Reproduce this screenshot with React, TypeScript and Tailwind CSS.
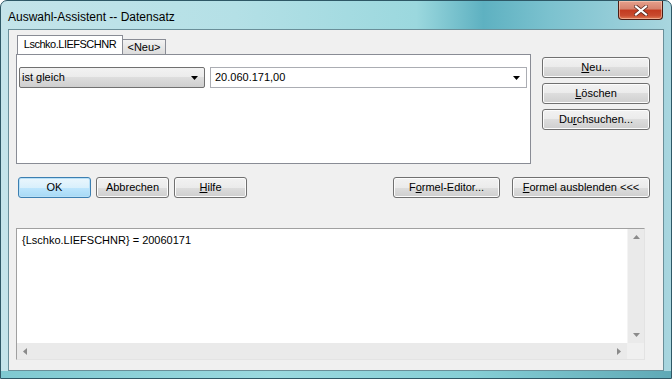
import type { ReactNode } from 'react'

const font = { fontFamily: '"Liberation Sans", Arial, sans-serif' }

function Btn({ children, w, primary }: { children: ReactNode; w: string; primary?: boolean }) {
  return (
    <div
      className={`${w} flex h-[21px] items-center justify-center rounded-[3px] border text-[11px] text-black ${
        primary
          ? 'border-[#3c7fb1] bg-[linear-gradient(#eaf6fd_0%,#d9f0fc_50%,#bee6fd_50%,#a7d9f5_100%)] shadow-[inset_0_0_0_1px_#b8e0f7]'
          : 'border-[#707070] bg-[linear-gradient(#f2f2f2_0%,#ebebeb_50%,#dddddd_50%,#cfcfcf_100%)] shadow-[inset_0_0_0_1px_#fcfcfc]'
      }`}
    >
      {children}
    </div>
  )
}

function Arrow({ dir, color = '#000' }: { dir: 'up' | 'down' | 'left' | 'right'; color?: string }) {
  const pts = {
    down: '0,0 7,0 3.5,4',
    up: '0,4 7,4 3.5,0',
    left: '4,0 4,7 0,3.5',
    right: '0,0 0,7 4,3.5',
  }[dir]
  const vertical = dir === 'up' || dir === 'down'
  return (
    <svg width={vertical ? 7 : 4} height={vertical ? 4 : 7} className="block">
      <polygon points={pts} fill={color} />
    </svg>
  )
}

export default function App() {
  return (
    <div style={font} className="h-[379px] w-[672px] bg-white">
      <div className="flex h-[379px] w-[672px] flex-col overflow-hidden rounded-t-[7px] border border-[#2e5866] bg-[linear-gradient(90deg,#c4e4ea_0%,#b4e0e6_35%,#9bd8de_62%,#5eb1c1_72%,#7cc2cf_82%,#a9d6df_100%)]">
        {/* title bar */}
        <div className="flex h-[28px] shrink-0 items-start justify-between">
          <span className="pl-[7px] pt-[7px] text-[12px] text-black">Auswahl-Assistent -- Datensatz</span>
          <div className="mr-[8px] flex h-[19px] w-[45px] items-center justify-center rounded-b-[4px] border border-t-0 border-[#4a1d14] bg-[linear-gradient(#e6a08c_0%,#d5826d_45%,#c33a1f_50%,#c84a2e_80%,#e07a54_100%)] shadow-[inset_0_0_0_1px_rgba(255,220,200,0.5)]">
            <svg width="14" height="11" viewBox="0 0 14 11">
              <path d="M2 1.5 L12 9.5 M12 1.5 L2 9.5" stroke="#5a2a20" strokeWidth="3.6" strokeLinecap="square" />
              <path d="M2 1.5 L12 9.5 M12 1.5 L2 9.5" stroke="#ffffff" strokeWidth="2.2" strokeLinecap="square" />
            </svg>
          </div>
        </div>

        {/* client area */}
        <div className="mx-[7px] h-[342px] w-[656px] shrink-0 border border-[#6a8f99] bg-[#f0f0f0]">
          <div className="flex pl-[7px] pt-[6px]">
            {/* tabs + panel */}
            <div className="w-[515px]">
              <div className="flex h-[18px] items-end pl-[1px]">
                <div className="relative z-10 flex h-[19px] w-[106px] items-center justify-center border border-b-0 border-[#898c95] bg-white pb-[1px] text-[11px] tracking-[-0.5px] text-black">
                  Lschko.LIEFSCHNR
                </div>
                <div className="flex h-[15px] w-[43px] items-center justify-center border border-b-0 border-l-0 border-[#898c95] bg-[linear-gradient(#f2f2f2,#dcdcdc)] text-[11px] text-black">
                  &lt;Neu&gt;
                </div>
              </div>
              <div className="h-[110px] border border-[#898c95] bg-white">
                <div className="flex gap-[5px] pl-[2px] pt-[12px]">
                  <div className="flex h-[21px] w-[186px] items-center justify-between rounded-[2px] border border-[#707070] bg-[linear-gradient(#f2f2f2_0%,#ebebeb_50%,#dddddd_50%,#cfcfcf_100%)] pl-[2px] pr-[6px] text-[11px] text-black">
                    <span>ist gleich</span>
                    <Arrow dir="down" />
                  </div>
                  <div className="flex h-[21px] w-[317px] items-center justify-between border border-[#abadb3] bg-white pl-[4px] pr-[6px] text-[11px] text-black">
                    <span>20.060.171,00</span>
                    <Arrow dir="down" />
                  </div>
                </div>
              </div>
            </div>

            {/* right buttons */}
            <div className="ml-[11px] flex flex-col gap-[5px] pt-[21px]">
              <Btn w="w-[108px]">
                <span className="underline underline-offset-[1px]">N</span>eu...
              </Btn>
              <Btn w="w-[108px]">
                <span className="underline underline-offset-[1px]">L</span>öschen
              </Btn>
              <Btn w="w-[108px]">
                Du<span className="underline underline-offset-[1px]">r</span>chsuchen...
              </Btn>
            </div>
          </div>

          {/* bottom buttons */}
          <div className="mt-[13px] flex pl-[9px]">
            <div className="flex gap-[5px]">
              <Btn w="w-[73px]" primary>
                OK
              </Btn>
              <Btn w="w-[73px]">Abbrechen</Btn>
              <Btn w="w-[73px]">
                <span className="underline underline-offset-[1px]">H</span>ilfe
              </Btn>
            </div>
            <div className="ml-[146px] flex gap-[12px]">
              <Btn w="w-[107px]">
                F<span className="underline underline-offset-[1px]">o</span>rmel-Editor...
              </Btn>
              <Btn w="w-[138px]">
                <span className="underline underline-offset-[1px]">F</span>ormel ausblenden &lt;&lt;&lt;
              </Btn>
            </div>
          </div>

          {/* formula text area */}
          <div className="ml-[7px] mt-[30px] flex h-[132px] w-[629px] flex-col border border-[#a0a0a0] border-b-[#e3e3e3] border-r-[#e3e3e3] bg-white">
            <div className="flex min-h-0 flex-1">
              <div className="flex-1 pl-[5px] pt-[3px] text-[11px] text-black">
                {'{Lschko.LIEFSCHNR} = 20060171'}
              </div>
              <div className="flex w-[17px] flex-col items-center justify-between border-l border-[#f4f4f4] bg-[#eaeaea] py-[6px]">
                <Arrow dir="up" color="#8a8a8a" />
                <Arrow dir="down" color="#8a8a8a" />
              </div>
            </div>
            <div className="flex h-[16px]">
              <div className="flex flex-1 items-center justify-between bg-[#eaeaea] px-[6px]">
                <Arrow dir="left" color="#8a8a8a" />
                <Arrow dir="right" color="#8a8a8a" />
              </div>
              <div className="w-[17px] bg-[#f0f0f0]" />
            </div>
          </div>
        </div>

        {/* bottom frame */}
        <div className="flex-1 bg-[linear-gradient(90deg,#7fc9d1_0%,#9ad9df_40%,#86cfd6_70%,#5fa9b6_100%)]" />
      </div>
    </div>
  )
}
